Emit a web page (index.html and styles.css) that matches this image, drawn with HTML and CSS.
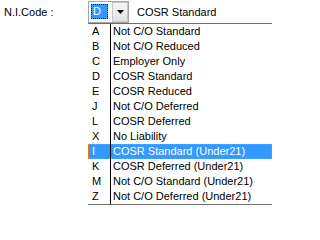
FILE: index.html
```html
<!DOCTYPE html>
<html>
<head>
<meta charset="utf-8">
<link rel="stylesheet" href="styles.css">
</head>
<body>
<div class="page">
  <div class="header">
    <span class="label">N.I.Code :</span>
    <div class="combo">
      <span class="combo-value">D</span>
      <span class="combo-btn"><svg width="7" height="4" viewBox="0 0 7 4"><path d="M0 0H7L3.5 4Z" fill="#000"/></svg></span>
    </div>
    <span class="desc">COSR Standard</span>
  </div>
  <div class="list">
    <div class="row"><span class="code">A</span><span class="name">Not C/O Standard</span></div>
    <div class="row"><span class="code">B</span><span class="name">Not C/O Reduced</span></div>
    <div class="row"><span class="code">C</span><span class="name">Employer Only</span></div>
    <div class="row"><span class="code">D</span><span class="name">COSR Standard</span></div>
    <div class="row"><span class="code">E</span><span class="name">COSR Reduced</span></div>
    <div class="row"><span class="code">J</span><span class="name">Not C/O Deferred</span></div>
    <div class="row"><span class="code">L</span><span class="name">COSR Deferred</span></div>
    <div class="row"><span class="code">X</span><span class="name">No Liability</span></div>
    <div class="row selected"><span class="code">I</span><span class="name">COSR Standard (Under21)</span></div>
    <div class="row"><span class="code">K</span><span class="name">COSR Deferred (Under21)</span></div>
    <div class="row"><span class="code">M</span><span class="name">Not C/O Standard (Under21)</span></div>
    <div class="row"><span class="code">Z</span><span class="name">Not C/O Deferred (Under21)</span></div>
  </div>
</div>
</body>
</html>
```
FILE: styles.css
```css
html, body {
  margin: 0;
  padding: 0;
  background: #ffffff;
}
.page {
  width: 272px;
  height: 205px;
  font-family: "Liberation Sans", Arial, sans-serif;
  font-size: 11px;
  color: #000;
  overflow: hidden;
}
.header {
  display: flex;
  align-items: flex-start;
  height: 23px;
}
.label {
  width: 88px;
  box-sizing: border-box;
  padding-left: 4px;
  line-height: 25px;
}
.combo {
  margin-top: 1px;
  width: 41px;
  height: 22px;
  box-sizing: border-box;
  border: 1px solid #a5a5a5;
  background: #fff;
  display: flex;
  align-items: flex-start;
  padding-left: 2px;
}
.combo-value {
  margin-top: 2px;
  width: 17px;
  height: 15px;
  box-sizing: border-box;
  background: #3399ff;
  border: 1px dotted #1a1a3a;
  color: #fff;
  line-height: 13px;
  padding-left: 1px;
}
.combo-btn {
  margin-left: 4px;
  width: 16px;
  height: 20px;
  box-sizing: border-box;
  border: 1px solid #c8c8c8;
  background: linear-gradient(#f6f6f6, #e2e2e2);
  display: flex;
  align-items: center;
  justify-content: center;
}
.desc {
  margin-left: 8px;
  line-height: 25px;
}
.list {
  margin-left: 88px;
  width: 184px;
  border-top: 1px solid #6e6e6e;
  border-bottom: 1px solid #6e6e6e;
}
.row {
  display: flex;
  height: 15px;
  line-height: 15px;
  position: relative;
}
.code {
  width: 23px;
  box-sizing: border-box;
  padding-left: 4px;
  border-right: 1px solid #000;
  flex: none;
}
.name {
  padding-left: 2px;
  white-space: nowrap;
}
.selected {
  background: #3399ff;
  color: #fff;
}
.selected::after {
  content: "";
  position: absolute;
  inset: 0;
  border: 1px dotted #f0801a;
}
```
